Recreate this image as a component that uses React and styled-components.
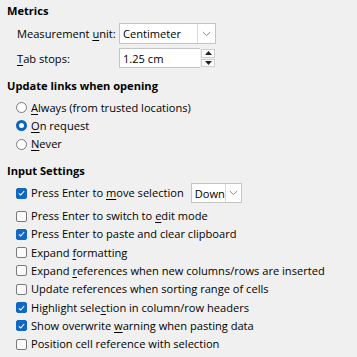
import React from 'react';
import styled, { createGlobalStyle } from 'styled-components';

const Global = createGlobalStyle`
  html, body { margin: 0; padding: 0; background: #f0f0f0; }
  body {
    font-family: "Open Sans", "Noto Sans", sans-serif;
    font-size: 11.1px;
    color: #000;
  }
`;

const Page = styled.div`
  width: 357px;
  height: 357px;
  box-sizing: border-box;
  padding: 3px 0 0 7px;
  display: flex;
  flex-direction: column;
  overflow: hidden;
`;

const Heading = styled.div`
  font-weight: 700;
  line-height: 16px;
  height: 16px;
  margin-top: ${(p) => p.$mt || 0}px;
  white-space: nowrap;
`;

const FieldRow = styled.div`
  display: grid;
  grid-template-columns: 102px 97px;
  align-items: center;
  padding-left: 10px;
  height: ${(p) => p.$h}px;
  margin-top: ${(p) => p.$mt}px;
  white-space: nowrap;
`;

const U = styled.span`
  text-decoration: underline;
  text-underline-offset: 1.5px;
`;

const Combo = styled.div`
  display: flex;
  align-items: stretch;
  height: ${(p) => p.$h}px;
  width: ${(p) => p.$w}px;
  margin-left: ${(p) => p.$ml || 0}px;
  box-sizing: border-box;
  background: #fff;
  border: 1px solid #c4c4c4;
  flex: none;
`;

const ComboText = styled.div`
  flex: 1;
  display: flex;
  align-items: center;
  padding-left: 3px;
  overflow: hidden;
`;

const ComboButton = styled.div`
  width: ${(p) => p.$w}px;
  border-left: 1px solid #d9d9d9;
  display: flex;
  align-items: center;
  justify-content: center;
`;

const SpinWrap = styled.div`
  display: flex;
  align-items: stretch;
  height: 20px;
  width: 96px;
`;

const SpinField = styled.div`
  flex: 1;
  box-sizing: border-box;
  background: #fff;
  border: 1px solid #c4c4c4;
  border-right: none;
  display: flex;
  align-items: center;
  padding-left: 3px;
`;

const SpinButtons = styled.div`
  width: 15px;
  display: flex;
  flex-direction: column;
  gap: 1px;
  padding: 1px 0 1px 1px;
  box-sizing: border-box;
`;

const SpinBtn = styled.div`
  flex: 1;
  background: #fdfdfd;
  border: 1px solid #d0d0d0;
  display: flex;
  align-items: center;
  justify-content: center;
`;

const OptionList = styled.div`
  display: flex;
  flex-direction: column;
  margin-top: ${(p) => p.$mt}px;
  padding-left: 9px;
`;

const OptionRow = styled.div`
  display: flex;
  align-items: center;
  gap: 4px;
  height: ${(p) => p.$h || 18.3}px;
  margin-bottom: ${(p) => p.$mb || 0}px;
  white-space: nowrap;
`;

const Radio = styled.span`
  width: 11px;
  height: 11px;
  box-sizing: border-box;
  border-radius: 50%;
  flex: none;
  border: ${(p) => (p.$on ? '3px solid #0a64c2' : '1px solid #7a7a7a')};
  background: #fff;
`;

const Box = styled.span`
  width: 11px;
  height: 11px;
  box-sizing: border-box;
  border-radius: 2px;
  flex: none;
  border: 1px solid ${(p) => (p.$on ? '#1067c4' : '#7a7a7a')};
  background: ${(p) => (p.$on ? '#1067c4' : '#fbfbfb')};
  display: flex;
  align-items: center;
  justify-content: center;
`;

const Label = styled.span`
  line-height: 16px;
`;

const Chevron = () => (
  <svg width="9" height="6" viewBox="0 0 9 6">
    <path d="M0.8 1 L4.5 4.6 L8.2 1" fill="none" stroke="#8a8a8a" strokeWidth="1" />
  </svg>
);

const Tri = ({ up }) => (
  <svg width="7" height="4" viewBox="0 0 7 4">
    <path d={up ? 'M0 4 L3.5 0 L7 4 Z' : 'M0 0 L3.5 4 L7 0 Z'} fill="#222" />
  </svg>
);

const Check = () => (
  <svg width="7" height="6" viewBox="0 0 7 6">
    <path d="M0.8 3.3 L2.7 5 L6.2 1" fill="none" stroke="#fff" strokeWidth="1.1" />
  </svg>
);

const CheckItem = ({ on, children }) => (
  <OptionRow>
    <Box $on={on}>{on && <Check />}</Box>
    <Label>{children}</Label>
  </OptionRow>
);

const RadioItem = ({ on, children }) => (
  <OptionRow>
    <Radio $on={on} />
    <Label>{children}</Label>
  </OptionRow>
);

export default function App() {
  return (
    <>
      <Global />
      <Page>
        <Heading>Metrics</Heading>
        <FieldRow $h={21} $mt={4}>
          <span>
            Measurement <U>u</U>nit:
          </span>
          <Combo $h={21} $w={97}>
            <ComboText>Centimeter</ComboText>
            <ComboButton $w={17}>
              <Chevron />
            </ComboButton>
          </Combo>
        </FieldRow>
        <FieldRow $h={20} $mt={4}>
          <span>
            <U>T</U>ab stops:
          </span>
          <SpinWrap>
            <SpinField>1.25 cm</SpinField>
            <SpinButtons>
              <SpinBtn>
                <Tri up />
              </SpinBtn>
              <SpinBtn>
                <Tri />
              </SpinBtn>
            </SpinButtons>
          </SpinWrap>
        </FieldRow>

        <Heading $mt={10}>Update links when opening</Heading>
        <OptionList $mt={4.5}>
          <RadioItem>
            <U>A</U>lways (from trusted locations)
          </RadioItem>
          <RadioItem on>
            <U>O</U>n request
          </RadioItem>
          <RadioItem>
            <U>N</U>ever
          </RadioItem>
        </OptionList>

        <Heading $mt={10}>Input Settings</Heading>
        <OptionList $mt={4}>
          <OptionRow $h={20} $mb={3.5}>
            <Box $on>
              <Check />
            </Box>
            <Label>
              Press Enter to <U>m</U>ove selection
            </Label>
            <Combo $h={20} $w={51} $ml={3}>
              <ComboText>Down</ComboText>
              <ComboButton $w={15}>
                <Chevron />
              </ComboButton>
            </Combo>
          </OptionRow>
          <CheckItem>
            Press Enter to switch to <U>e</U>dit mode
          </CheckItem>
          <CheckItem on>Press Enter to paste and clear clipboard</CheckItem>
          <CheckItem>
            Expand <U>f</U>ormatting
          </CheckItem>
          <CheckItem>
            Expand <U>r</U>eferences when new columns/rows are inserted
          </CheckItem>
          <CheckItem>Update references when sorting range of cells</CheckItem>
          <CheckItem on>
            Highlight sele<U>c</U>tion in column/row headers
          </CheckItem>
          <CheckItem on>
            Show overwrite <U>w</U>arning when pasting data
          </CheckItem>
          <CheckItem>Position cell reference with selection</CheckItem>
        </OptionList>
      </Page>
    </>
  );
}
